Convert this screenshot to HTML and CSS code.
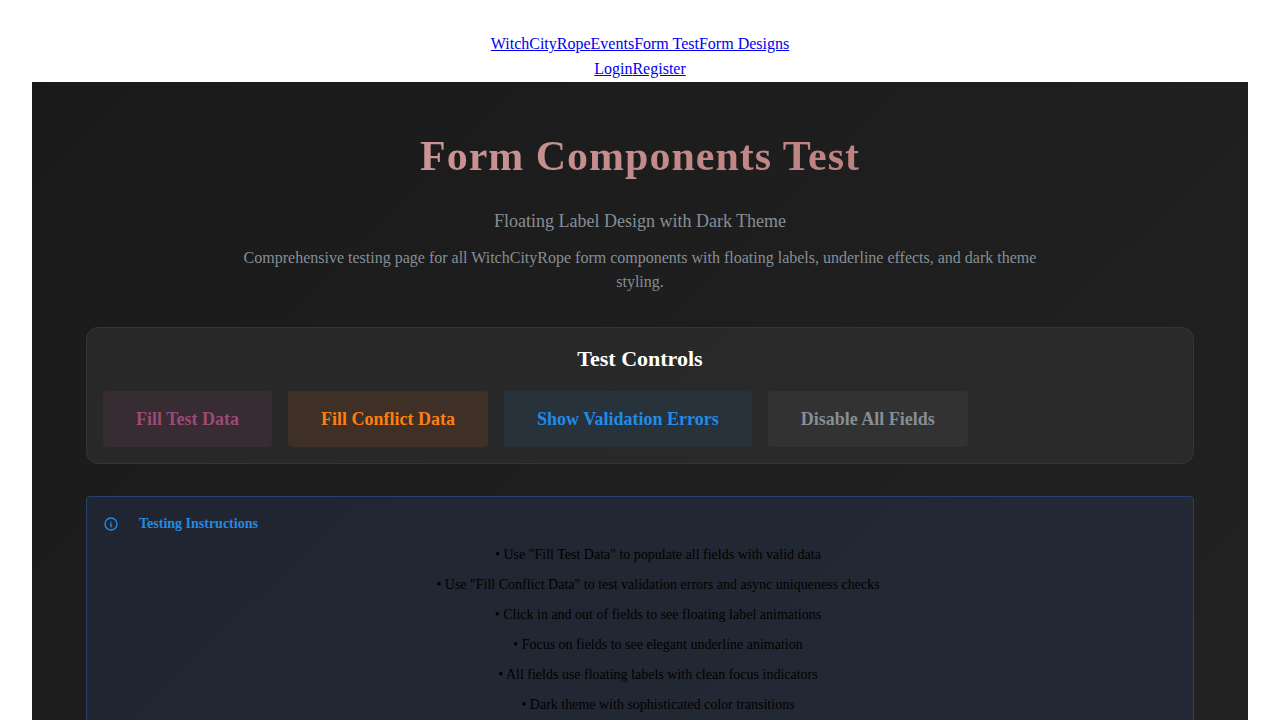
FILE: index.html
```html
<!DOCTYPE html>
<html lang="en">
<head>
<meta charset="utf-8">
<title>Form Components Test</title>
<link rel="stylesheet" href="styles.css">
</head>
<body>
<nav class="nav">
  <div class="nav-row"><a href="#">WitchCityRope</a><a href="#">Events</a><a href="#">Form Test</a><a href="#">Form Designs</a></div>
  <div class="nav-row"><a href="#">Login</a><a href="#">Register</a></div>
</nav>
<main class="page">
  <div class="container">
    <header class="intro">
      <h1 class="title">Form Components Test</h1>
      <p class="subtitle">Floating Label Design with Dark Theme</p>
      <p class="description">Comprehensive testing page for all WitchCityRope form components with floating labels, underline effects, and dark theme styling.</p>
    </header>
    <section class="panel">
      <h2 class="panel-title">Test Controls</h2>
      <div class="actions">
        <button class="btn btn-plum" type="button">Fill Test Data</button>
        <button class="btn btn-orange" type="button">Fill Conflict Data</button>
        <button class="btn btn-blue" type="button">Show Validation Errors</button>
        <button class="btn btn-gray" type="button">Disable All Fields</button>
      </div>
    </section>
    <section class="alert">
      <svg class="alert-icon" viewBox="0 0 24 24" fill="none" stroke="currentColor" stroke-width="2" stroke-linecap="round" stroke-linejoin="round" aria-hidden="true"><path d="M3 12a9 9 0 1 0 18 0a9 9 0 0 0 -18 0"/><path d="M12 9h.01"/><path d="M11 12h1v4h1"/></svg>
      <div class="alert-body">
        <h3 class="alert-title">Testing Instructions</h3>
        <div class="alert-lines">
          <p>• Use "Fill Test Data" to populate all fields with valid data</p>
          <p>• Use "Fill Conflict Data" to test validation errors and async uniqueness checks</p>
          <p>• Click in and out of fields to see floating label animations</p>
          <p>• Focus on fields to see elegant underline animation</p>
          <p>• All fields use floating labels with clean focus indicators</p>
          <p>• Dark theme with sophisticated color transitions</p>
        </div>
      </div>
    </section>
  </div>
</main>
</body>
</html>
```

FILE: styles.css
```css
* {
  box-sizing: border-box;
}

body {
  margin: 0;
  padding: 32px 32px 0;
  background: #fff;
  font-family: "Liberation Serif", "Times New Roman", serif;
  font-size: 16px;
  line-height: 24px;
  text-align: center;
}

h1, h2, h3, p {
  margin: 0;
}

.nav-row {
  display: flex;
  justify-content: center;
  padding-bottom: 1px;
}

.nav-row a {
  color: #0000ee;
}

.page {
  min-height: 1400px;
  padding: 48px 32px;
  background: linear-gradient(135deg, #1a1a1a 0%, #252525 100%);
}

.container {
  max-width: 1140px;
  margin: 0 auto;
  padding: 0 16px;
}

.intro {
  display: flex;
  flex-direction: column;
  align-items: center;
  margin-bottom: 33px;
}

.title {
  align-self: stretch;
  margin-bottom: 24px;
  background: linear-gradient(135deg, #d4a5a5 0%, #b47171 100%);
  background-clip: text;
  color: transparent;
  font-size: 42px;
  line-height: 52px;
  letter-spacing: 1px;
}

.subtitle {
  margin-bottom: 10px;
  color: #868e96;
  font-size: 18px;
  line-height: 30px;
}

.description {
  max-width: 800px;
  color: #868e96;
}

.panel {
  margin-bottom: 32px;
  padding: 16px;
  border: 1px solid #353535;
  border-radius: 12px;
  background: linear-gradient(135deg, #282828, #2a2a2a);
}

.panel-title {
  margin-bottom: 18px;
  color: #fff;
  font-size: 22px;
  line-height: 29px;
}

.actions {
  display: flex;
  flex-wrap: wrap;
  gap: 16px;
}

.btn {
  height: 56px;
  padding: 0 32px;
  border: 1px solid transparent;
  border-radius: 4px;
  font: bold 18px/1 "Liberation Serif", "Times New Roman", serif;
  cursor: pointer;
}

.btn-plum {
  background: #372c31;
  color: #9b4a75;
}

.btn-orange {
  background: #3e3026;
  color: #fd7e14;
}

.btn-blue {
  background: #28323b;
  color: #228be6;
}

.btn-gray {
  background: #323232;
  color: #868e96;
}

.alert {
  display: flex;
  gap: 20px;
  padding: 16px;
  border: 1px solid #264273;
  border-radius: 4px;
  background: linear-gradient(135deg, #202631, #242a35);
}

.alert-icon {
  flex: none;
  width: 16px;
  height: 16px;
  margin-top: 3px;
  color: #228be6;
}

.alert-body {
  flex: 1;
}

.alert-title {
  margin-bottom: 9px;
  color: #228be6;
  font-size: 14px;
  line-height: 22px;
  text-align: left;
}

.alert-lines {
  display: flex;
  flex-direction: column;
  gap: 8px;
  color: #000;
  font-size: 14px;
  line-height: 22px;
}
```
